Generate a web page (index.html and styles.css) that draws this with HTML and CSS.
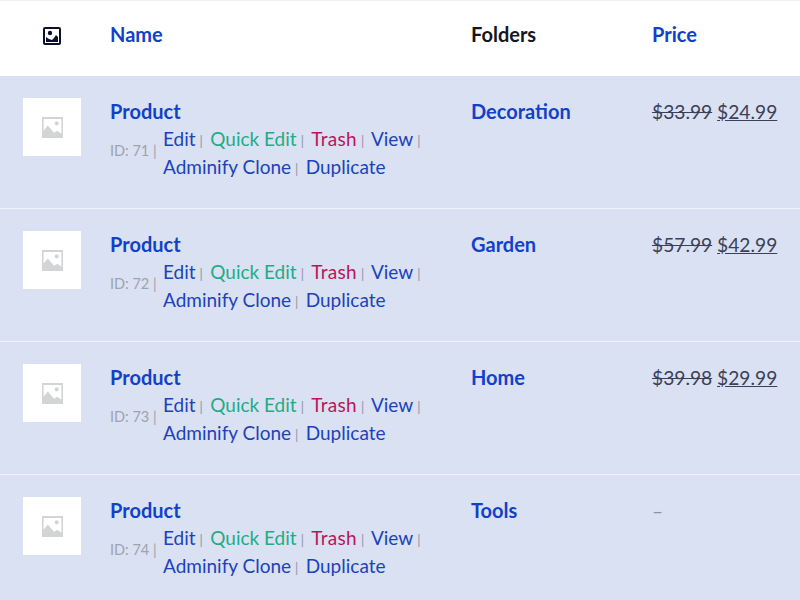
FILE: index.html
```html
<!DOCTYPE html>
<html lang="en">
<head>
<meta charset="utf-8">
<title>Products</title>
<link rel="stylesheet" href="styles.css">
</head>
<body>
<table class="list">
  <colgroup><col class="c-thumb"><col class="c-name"><col class="c-folder"><col class="c-price"></colgroup>
  <thead>
    <tr>
      <th class="thumb-head"><svg class="head-icon" viewBox="0 0 18 18" width="18" height="18"><path fill="#0b0f2a" fill-rule="evenodd" d="M2 0h14a2 2 0 0 1 2 2v14a2 2 0 0 1-2 2H2a2 2 0 0 1-2-2V2a2 2 0 0 1 2-2zm0 2v14h14V2z"/><circle cx="7" cy="6" r="2.2" fill="#0b0f2a"/><path fill="#0b0f2a" d="M3 15v-5l3 2 3 1 2-2 2-3 2 2v5z"/></svg></th>
      <th><a class="sort" href="#">Name</a></th>
      <th class="plain">Folders</th>
      <th><a class="sort" href="#">Price</a></th>
    </tr>
  </thead>
  <tbody>
    <tr>
      <td class="thumb-cell"><div class="thumb"><svg viewBox="0 0 20 20" width="21" height="21"><path fill="#d2d4d6" fill-rule="evenodd" d="M0 0h20v20H0zM14 4a2 2 0 1 0 0 4 2 2 0 0 0 0-4zM1.500 2v11l4-5 6 7 3-2 4 3V2z"/></svg></div></td>
      <td><a class="title" href="#">Product</a>
        <div class="meta"><span class="id">ID: 71 |</span>
          <div class="actions"><span class="act"><a href="#">Edit</a><i>|</i></span> <span class="act"><a class="green" href="#">Quick Edit</a><i>|</i></span> <span class="act"><a class="red" href="#">Trash</a><i>|</i></span> <span class="act"><a href="#">View</a><i>|</i></span> <span class="act"><a href="#">Adminify Clone</a><i>|</i></span> <span class="act"><a href="#">Duplicate</a></span></div>
        </div>
      </td>
      <td><a class="title" href="#">Decoration</a></td>
      <td class="price"><del>$33.99</del> <u>$24.99</u></td>
    </tr>
    <tr>
      <td class="thumb-cell"><div class="thumb"><svg viewBox="0 0 20 20" width="21" height="21"><path fill="#d2d4d6" fill-rule="evenodd" d="M0 0h20v20H0zM14 4a2 2 0 1 0 0 4 2 2 0 0 0 0-4zM1.500 2v11l4-5 6 7 3-2 4 3V2z"/></svg></div></td>
      <td><a class="title" href="#">Product</a>
        <div class="meta"><span class="id">ID: 72 |</span>
          <div class="actions"><span class="act"><a href="#">Edit</a><i>|</i></span> <span class="act"><a class="green" href="#">Quick Edit</a><i>|</i></span> <span class="act"><a class="red" href="#">Trash</a><i>|</i></span> <span class="act"><a href="#">View</a><i>|</i></span> <span class="act"><a href="#">Adminify Clone</a><i>|</i></span> <span class="act"><a href="#">Duplicate</a></span></div>
        </div>
      </td>
      <td><a class="title" href="#">Garden</a></td>
      <td class="price"><del>$57.99</del> <u>$42.99</u></td>
    </tr>
    <tr>
      <td class="thumb-cell"><div class="thumb"><svg viewBox="0 0 20 20" width="21" height="21"><path fill="#d2d4d6" fill-rule="evenodd" d="M0 0h20v20H0zM14 4a2 2 0 1 0 0 4 2 2 0 0 0 0-4zM1.500 2v11l4-5 6 7 3-2 4 3V2z"/></svg></div></td>
      <td><a class="title" href="#">Product</a>
        <div class="meta"><span class="id">ID: 73 |</span>
          <div class="actions"><span class="act"><a href="#">Edit</a><i>|</i></span> <span class="act"><a class="green" href="#">Quick Edit</a><i>|</i></span> <span class="act"><a class="red" href="#">Trash</a><i>|</i></span> <span class="act"><a href="#">View</a><i>|</i></span> <span class="act"><a href="#">Adminify Clone</a><i>|</i></span> <span class="act"><a href="#">Duplicate</a></span></div>
        </div>
      </td>
      <td><a class="title" href="#">Home</a></td>
      <td class="price"><del>$39.98</del> <u>$29.99</u></td>
    </tr>
    <tr>
      <td class="thumb-cell"><div class="thumb"><svg viewBox="0 0 20 20" width="21" height="21"><path fill="#d2d4d6" fill-rule="evenodd" d="M0 0h20v20H0zM14 4a2 2 0 1 0 0 4 2 2 0 0 0 0-4zM1.500 2v11l4-5 6 7 3-2 4 3V2z"/></svg></div></td>
      <td><a class="title" href="#">Product</a>
        <div class="meta"><span class="id">ID: 74 |</span>
          <div class="actions"><span class="act"><a href="#">Edit</a><i>|</i></span> <span class="act"><a class="green" href="#">Quick Edit</a><i>|</i></span> <span class="act"><a class="red" href="#">Trash</a><i>|</i></span> <span class="act"><a href="#">View</a><i>|</i></span> <span class="act"><a href="#">Adminify Clone</a><i>|</i></span> <span class="act"><a href="#">Duplicate</a></span></div>
        </div>
      </td>
      <td><a class="title" href="#">Tools</a></td>
      <td class="price muted">–</td>
    </tr>
  </tbody>
</table>
</body>
</html>
```
FILE: styles.css
```css
html, body { margin: 0; padding: 0; }
body {
  width: 800px;
  height: 600px;
  overflow: hidden;
  background: #d9e1f2;
  font-family: Lato, "Open Sans", sans-serif;
  color: #1e40c0;
}
a { text-decoration: none; color: #1241c9; }
.list { width: 800px; border-collapse: collapse; table-layout: fixed; }
.c-thumb { width: 110px; }
.c-name { width: 361px; }
.c-folder { width: 181px; }
.c-price { width: 148px; }
thead tr { background: #fff; height: 75px; border-top: 1px solid #eef0f4; border-bottom: 1px solid #fff; }
th { text-align: left; padding: 0 0 8px; font-size: 20px; font-weight: 700; color: #111; }
.thumb-head { padding: 0 0 4px 43px; line-height: 0; }
.head-icon { display: inline-block; }
.plain { color: #16161c; }
tbody tr { height: 133px; border-bottom: 1px solid #f0f3fb; }
td { vertical-align: top; padding: 22px 0 0; }
.thumb-cell { padding-left: 23px; }
.thumb { width: 58px; height: 58px; background: #fff; display: flex; align-items: center; justify-content: center; }
.title { display: block; font-size: 20px; font-weight: 700; line-height: 27px; color: #1241c9; }
.meta { display: flex; align-items: center; }
.id { flex: none; width: 53px; padding-bottom: 6px; font-size: 14.500px; color: #9ea3ad; }
.actions { font-size: 19px; line-height: 28px; width: 290px; }
.act { white-space: nowrap; margin-right: 2.500px; }
.act a { color: #1c42bb; }
.act a.green { color: #1eac85; }
.act a.red { color: #b7165a; letter-spacing: 0.300px; }
.act i { font-style: normal; font-size: 13px; line-height: 0; color: #8f94a3; margin-left: 4px; }
.price { font-size: 19.200px; color: #3b4058; line-height: 27px; }
.muted { color: #8d92a3; }
```
